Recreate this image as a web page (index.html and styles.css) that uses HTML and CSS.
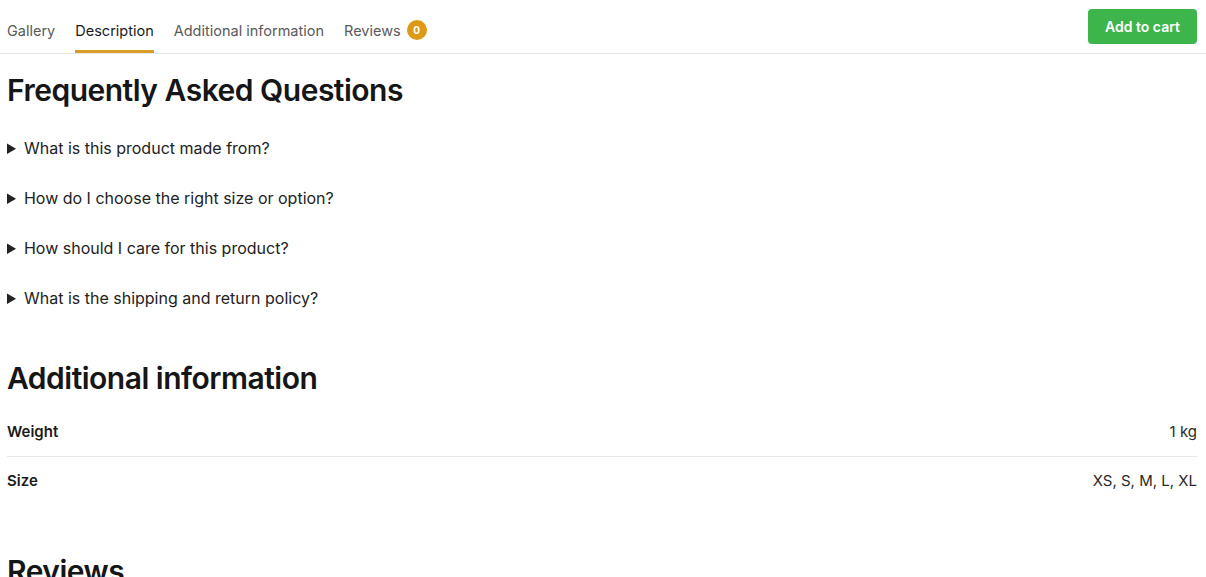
FILE: index.html
```html
<!DOCTYPE html>
<html lang="en">
<head>
<meta charset="utf-8">
<title>Product</title>
<link rel="stylesheet" href="styles.css">
</head>
<body>
<div class="page">
  <nav class="tabbar">
    <ul class="tabs">
      <li class="tab">Gallery</li>
      <li class="tab active">Description</li>
      <li class="tab">Additional information</li>
      <li class="tab">Reviews <span class="badge">0</span></li>
    </ul>
    <button class="cart-btn">Add to cart</button>
  </nav>

  <section class="faq">
    <h2 class="heading">Frequently Asked Questions</h2>
    <details class="faq-item"><summary>What is this product made from?</summary></details>
    <details class="faq-item"><summary>How do I choose the right size or option?</summary></details>
    <details class="faq-item"><summary>How should I care for this product?</summary></details>
    <details class="faq-item"><summary>What is the shipping and return policy?</summary></details>
  </section>

  <section class="info">
    <h2 class="heading">Additional information</h2>
    <div class="info-row"><span class="label">Weight</span><span class="value">1 kg</span></div>
    <div class="info-row"><span class="label">Size</span><span class="value">XS, S, M, L, XL</span></div>
  </section>

  <section class="reviews">
    <h2 class="heading">Reviews</h2>
  </section>
</div>
</body>
</html>
```

FILE: styles.css
```css
html, body {
  margin: 0;
  padding: 0;
  background: #fff;
}
body {
  font-family: Inter, "Liberation Sans", sans-serif;
  color: #1b1b1b;
  overflow: hidden;
}
.page {
  padding: 0 9px 0 7px;
}
.tabbar {
  display: flex;
  align-items: center;
  justify-content: space-between;
  height: 53px;
  border-bottom: 1px solid #e8e8e8;
  margin: 0 -9px 0 -7px;
  padding: 0 9px 0 7px;
}
.tabs {
  display: flex;
  gap: 20px;
  list-style: none;
  margin: 0;
  padding: 0;
  height: 100%;
}
.tab {
  display: flex;
  align-items: center;
  gap: 6px;
  font-size: 14.5px;
  color: #5a5a5a;
  height: 100%;
  padding-top: 10px;
  box-sizing: border-box;
  border-bottom: 3px solid transparent;
  margin-bottom: -1px;
}
.tab.active {
  color: #1b1b1b;
  border-bottom-color: #d99c27;
}
.badge {
  display: inline-flex;
  align-items: center;
  justify-content: center;
  width: 20px;
  height: 20px;
  border-radius: 50%;
  background: #dc9a18;
  color: #fff;
  font-size: 10px;
  font-weight: 700;
}
.cart-btn {
  font-family: inherit;
  background: #3db54b;
  color: #fff;
  border: 0;
  border-radius: 4px;
  font-size: 14px;
  font-weight: 600;
  width: 109px;
  height: 35px;
  cursor: pointer;
}
.heading {
  font-size: 30px;
  line-height: 36px;
  font-weight: 600;
  margin: 0;
  color: #161616;
  letter-spacing: -0.5px;
}
.faq {
  padding-top: 18px;
}
.faq .heading {
  margin-bottom: 28px;
}
.faq-item {
  margin-bottom: 26px;
}
.faq-item summary {
  font-size: 16px;
  line-height: 24px;
  color: #222;
  cursor: pointer;
}
.info {
  padding-top: 24px;
}
.info .heading {
  margin-bottom: 12px;
}
.info-row {
  display: flex;
  justify-content: space-between;
  padding: 12px 0;
  font-size: 15px;
  line-height: 24px;
}
.info-row + .info-row {
  border-top: 1px solid #e8e8e8;
}
.label {
  font-weight: 600;
  color: #1b1b1b;
}
.value {
  color: #2a2a2a;
}
.reviews {
  padding-top: 48px;
}
```
